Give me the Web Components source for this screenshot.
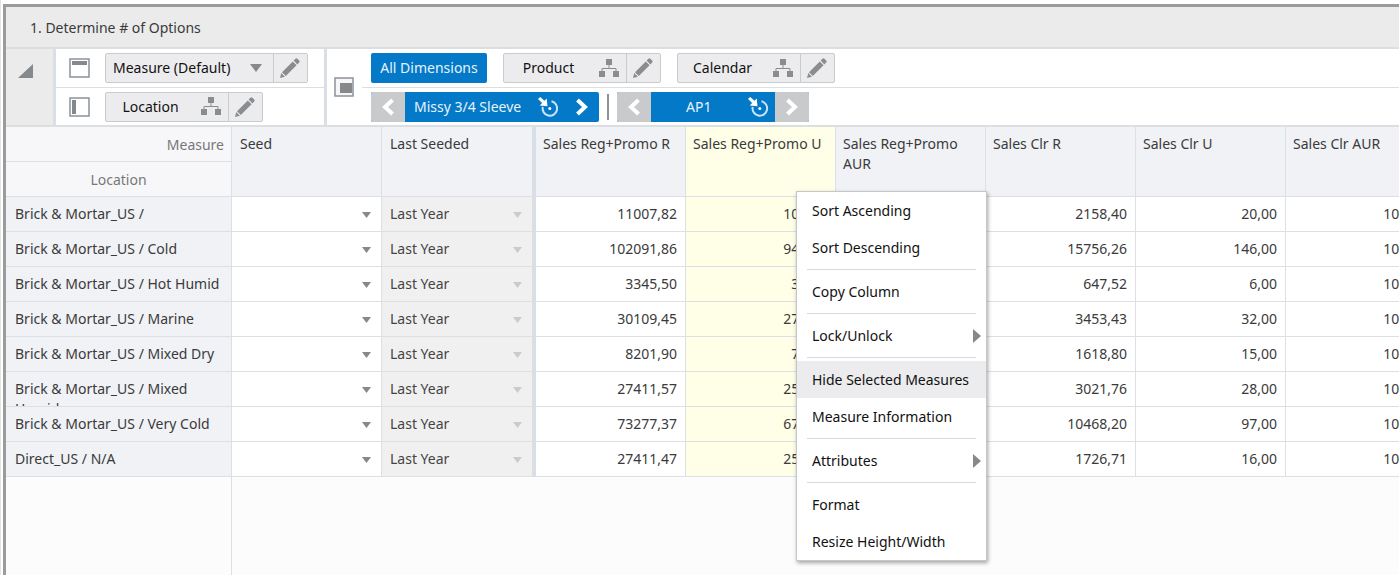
<!DOCTYPE html>
<html lang="en">
<head>
<meta charset="utf-8">
<title>Determine # of Options</title>
<style>
    html, body { height: 100%; }
    body {
        margin: 0;
        overflow: hidden;
        background: #fff;
        color: #3a3a3a;
        font: 14px/20px "Noto Sans", "Open Sans", sans-serif;
    }
</style>
</head>
<body>
<plan-view>
    <span slot="title">1. Determine # of Options</span>
    <plan-toolbar slot="toolbar"></plan-toolbar>
    <pivot-grid slot="grid"></pivot-grid>
    <column-menu slot="menu"></column-menu>
</plan-view>

<script>
const icons = {
    pencil: `<svg width="22" height="22" viewBox="0 0 22 22" fill="#8a8d90"><path d="M1 21l1.300-4.900 3.600 3.600zM3 15.200L13.800 4.400l3.800 3.800L6.800 19zM14.600 3.600l1.800-1.800q1-1 2 0l1.800 1.800q1 1 0 2l-1.800 1.800z"/></svg>`,
    tree: `<svg width="20" height="19" viewBox="0 0 20 19"><path d="M10 6v4M3 13v-3.500h14V13" fill="none" stroke="#8a8d90" stroke-width="1"/><path d="M7 0h6v6H7zM0 12h6v6H0zM14 12h6v6h-6z" fill="#8a8d90"/></svg>`,
    target: `<svg width="22" height="22" viewBox="0 0 22 22"><path d="M14.500 5.300a7.300 7.300 0 1 1-8.800 5.600" fill="none" stroke="#c8e4f7" stroke-width="2"/><circle cx="12.800" cy="12.500" r="1.500" fill="#fff"/><path d="M3.200 1l4.300 3.700 2.200-2.200.8 7.700-7.700-.8 2.300-2.300L1 3z" fill="#fff"/></svg>`,
    down: `<svg width="12" height="8" viewBox="0 0 12 8"><path d="M0 0h12L6 8z" fill="#85898c"/></svg>`,
    prev: `<svg width="14" height="18" viewBox="0 0 14 18"><path d="M11.500 2L4 9l7.500 7" fill="none" stroke="#fff" stroke-width="4"/></svg>`,
    next: `<svg width="14" height="18" viewBox="0 0 14 18"><path d="M2.500 2L10 9l-7.500 7" fill="none" stroke="#fff" stroke-width="4"/></svg>`
};

class PlanView extends HTMLElement {
    constructor() {
        super();
        this.root = this.attachShadow({mode: 'open'});
        this.root.innerHTML = `
            <style>
                :host {
                    display: flex;
                    box-sizing: border-box;
                    height: 100%;
                    padding: 4px 0 0 2px;
                    border-left: 1px solid #e4e4e4;
                }
                section {
                    flex: 1;
                    min-width: 0;
                    display: flex;
                    flex-direction: column;
                    border: solid #9b9b9b;
                    border-width: 3px 0 0 3px;
                }
                h1 {
                    margin: 0;
                    padding: 11px 24px 9px;
                    font: inherit;
                    background: #ebebeb;
                    border-bottom: 2px solid #dcdee0;
                }
            </style>
            <section>
                <h1><slot name="title"></slot></h1>
                <slot name="toolbar"></slot>
                <slot name="grid"></slot>
            </section>
            <slot name="menu"></slot>
        `;
    }
}
customElements.define('plan-view', PlanView);

// Dimension chip: label, an optional icon and an edit button
class DimChip extends HTMLElement {
    constructor() {
        super();
        this.root = this.attachShadow({mode: 'open'});
    }

    connectedCallback() {
        const icon = this.getAttribute('icon');
        this.root.innerHTML = `
            <style>
                :host {
                    display: inline-flex;
                    box-sizing: border-box;
                    height: 30px;
                    color: #111;
                    background: #ececee;
                    border: 1px solid #c9cbce;
                    border-radius: 2px;
                }
                button {
                    display: flex;
                    align-items: center;
                    padding: 0;
                    border: 0;
                    background: none;
                    color: inherit;
                    font: inherit;
                }
                .main { width: 122px; padding: 0 7px 0 0; }
                .main span { flex: 1; padding-right: 6px; text-align: center; }
                :host([icon=down]) .main { width: 167px; padding: 0 11px 0 7px; }
                :host([icon=down]) span { padding: 0; text-align: left; white-space: nowrap; }
                .edit {
                    width: 34px;
                    justify-content: center;
                    padding-right: 2px;
                    border-left: 1px solid #c9cbce;
                }
            </style>
            <button class="main"><span><slot></slot></span>${icons[icon]}</button>
            <button class="edit" aria-label="Edit ${this.textContent}">${icons.pencil}</button>
        `;
    }
}
customElements.define('dim-chip', DimChip);

class DimStepper extends HTMLElement {
    constructor() {
        super();
        this.root = this.attachShadow({mode: 'open'});
    }

    connectedCallback() {
        const off = name => this.hasAttribute(name) ? 'disabled' : '';
        this.root.innerHTML = `
            <style>
                :host {
                    display: inline-flex;
                    height: 30px;
                    color: #e6f3fc;
                    background: #0479c7;
                    border-radius: 2px;
                    overflow: hidden;
                }
                button {
                    display: flex;
                    align-items: center;
                    justify-content: center;
                    width: 34px;
                    padding: 0;
                    border: 0;
                    background: none;
                    color: inherit;
                    font: inherit;
                }
                button:disabled { background: #c9cacc; }
                .value { width: auto; min-width: 124px; padding: 0 6px 0 9px; }
                .value span { flex: 1; margin-right: 16px; text-align: center; white-space: nowrap; }
                :host([last]) .value { padding-left: 15px; }
            </style>
            <button ${off('first')} aria-label="Previous">${icons.prev}</button>
            <button class="value"><span><slot></slot></span>${icons.target}</button>
            <button ${off('last')} aria-label="Next">${icons.next}</button>
        `;
    }
}
customElements.define('dim-stepper', DimStepper);

class PlanToolbar extends HTMLElement {
    constructor() {
        super();
        this.root = this.attachShadow({mode: 'open'});
        this.root.innerHTML = `
            <style>
                :host {
                    display: flex;
                    background: #fff;
                    border-bottom: 2px solid #dcdfe2;
                }
                .fold {
                    display: flex;
                    align-items: flex-start;
                    width: 50px;
                    padding: 15px 0 0 12px;
                    border: 0;
                    border-right: 3px solid #d9dfe4;
                    background: #ebebeb;
                }
                .axes { width: 268px; border-right: 3px solid #d9dfe4; }
                .page { display: flex; align-items: center; padding: 0 8px 0 7px; }
                .slices { flex: 1; }
                .row {
                    display: flex;
                    align-items: center;
                    box-sizing: border-box;
                    height: 37px;
                }
                .row:first-child { height: 39px; border-bottom: 1px solid #dcdfe2; }
                .axes .row { gap: 15px; padding-left: 13px; }
                .slices .row { padding-left: 9px; gap: 16px; }
                .slices .row + .row { gap: 8px; }
                .all {
                    height: 30px;
                    width: 116px;
                    padding: 0;
                    border: 0;
                    border-radius: 2px;
                    background: #0479c7;
                    color: #e6f3fc;
                    font: inherit;
                    white-space: nowrap;
                }
                hr { width: 2px; height: 26px; margin: 0; border: 0; background: #909396; }
            </style>
            <button class="fold" aria-label="Collapse">
                <svg width="15" height="14" viewBox="0 0 15 14"><path d="M15 0v14H0z" fill="#85898c"/></svg>
            </button>
            <div class="axes">
                <div class="row">
                    <svg width="21" height="20" viewBox="0 0 21 20"><path d="M1 1h19v18H1z" fill="#fff" stroke="#8b939b" stroke-width="1.500"/><path d="M3 3h15v4H3z" fill="#85898c"/></svg>
                    <dim-chip icon="down">Measure (Default)</dim-chip>
                </div>
                <div class="row">
                    <svg width="21" height="20" viewBox="0 0 21 20"><path d="M1 1h19v18H1z" fill="#fff" stroke="#8b939b" stroke-width="1.500"/><path d="M3 3h4v14H3z" fill="#85898c"/></svg>
                    <dim-chip icon="tree">Location</dim-chip>
                </div>
            </div>
            <div class="page">
                <svg width="20" height="20" viewBox="0 0 20 20"><path d="M1 1h18v18H1z" fill="#f6f6f6" stroke="#8b939b" stroke-width="1.500"/><path d="M6 6h12v10H6z" fill="#85898c"/></svg>
            </div>
            <div class="slices">
                <div class="row">
                    <button class="all">All Dimensions</button>
                    <dim-chip icon="tree">Product</dim-chip>
                    <dim-chip icon="tree">Calendar</dim-chip>
                </div>
                <div class="row">
                    <dim-stepper first>Missy 3/4 Sleeve</dim-stepper>
                    <hr>
                    <dim-stepper first last>AP1</dim-stepper>
                </div>
            </div>
        `;
    }
}
customElements.define('plan-toolbar', PlanToolbar);

class PickCell extends HTMLElement {
    constructor() {
        super();
        this.root = this.attachShadow({mode: 'open'});
    }

    connectedCallback() {
        const value = this.getAttribute('value');
        const label = this.getAttribute('label');
        const off = this.hasAttribute('disabled') ? 'disabled' : '';
        this.root.innerHTML = `
            <style>
                :host { display: flex; align-items: center; height: 34px; padding-right: 10px; }
                :host([disabled]) { background: #f0f0f0; }
                :host([disabled]) svg { opacity: .35; }
                select {
                    flex: 1;
                    min-width: 0;
                    height: 34px;
                    padding: 0 8px;
                    border: 0;
                    appearance: none;
                    background: none;
                    color: #444;
                    opacity: 1;
                    font: inherit;
                }
                svg { width: 9px; height: 6px; margin-top: 2px; }
            </style>
            <select aria-label="${label}" ${off}><option>${value}</option></select>${icons.down}
        `;
    }
}
customElements.define('pick-cell', PickCell);

const measures = ['Sales Reg+Promo R', 'Sales Reg+Promo U', 'Sales Reg+Promo AUR', 'Sales Clr R', 'Sales Clr U', 'Sales Clr AUR'];
const rows = [
    ['Brick & Mortar_US /', '11007,82', '102,00', '', '2158,40', '20,00', '107,92'],
    ['Brick & Mortar_US / Cold', '102091,86', '946,00', '', '15756,26', '146,00', '107,92'],
    ['Brick & Mortar_US / Hot Humid', '3345,50', '31,00', '', '647,52', '6,00', '107,92'],
    ['Brick & Mortar_US / Marine', '30109,45', '279,00', '', '3453,43', '32,00', '107,92'],
    ['Brick & Mortar_US / Mixed Dry', '8201,90', '76,00', '', '1618,80', '15,00', '107,92'],
    ['Brick & Mortar_US / Mixed Humid', '27411,57', '254,00', '', '3021,76', '28,00', '107,92'],
    ['Brick & Mortar_US / Very Cold', '73277,37', '679,00', '', '10468,20', '97,00', '107,92'],
    ['Direct_US / N/A', '27411,47', '254,00', '', '1726,71', '16,00', '107,92']
];

class PivotGrid extends HTMLElement {
    constructor() {
        super();
        this.root = this.attachShadow({mode: 'open'});
    }

    connectedCallback() {
        this.render();
    }

    render() {
        const picked = i => i === 1 ? 'picked' : '';
        const esc = text => text.replace('&', '&amp;');
        this.root.innerHTML = `
            <style>
                :host {
                    flex: 1;
                    min-height: 0;
                    display: flex;
                    flex-direction: column;
                    overflow: hidden;
                    background: #fcfcfd;
                }
                table { table-layout: fixed; width: 0; border-spacing: 0; }
                .side { width: 226px; }
                .col { width: 150px; }
                .edge { width: 154px; }
                th, td {
                    box-sizing: border-box;
                    height: 35px;
                    padding: 0;
                    border: solid #dcdfe3;
                    border-width: 0 1px 1px 0;
                    font-weight: normal;
                    vertical-align: top;
                    background: #fff;
                }
                th { text-align: left; background: #f1f2f6; }
                thead th { padding: 7px; }
                thead th.lead { padding-left: 8px; }
                thead th.corner { padding: 8px 7px 6px; color: #777; background: #f7f7fa; }
                .corner.top { text-align: right; }
                .corner.low { text-align: center; }
                .last { border-right: 4px solid #d9dfe4; }
                tbody th div { height: 27px; padding: 7px 5px 0 9px; overflow: hidden; }
                td.num { padding: 7px 8px 0; text-align: right; }
                .picked { background: #ffffe8; }
                .rest { flex: 1; box-sizing: border-box; width: 226px; border-right: 1px solid #dcdfe3; }
            </style>
            <table>
                <colgroup>
                    <col class="side"><col class="col"><col class="edge">
                    ${measures.map(_ => '<col class="col">').join('')}
                </colgroup>
                <thead>
                    <tr>
                        <th class="corner top">Measure</th>
                        <th rowspan="2" class="lead">Seed</th>
                        <th rowspan="2" class="lead last">Last Seeded</th>
                        ${measures.map((m, i) => `<th rowspan="2" class="${picked(i)}">${m}</th>`).join('')}
                    </tr>
                    <tr><th class="corner low">Location</th></tr>
                </thead>
                <tbody>
                    ${rows.map(([name, ...nums]) => `
                        <tr>
                            <th scope="row"><div>${esc(name)}</div></th>
                            <td><pick-cell label="Seed" value=""></pick-cell></td>
                            <td class="last"><pick-cell label="Last Seeded" value="Last Year" disabled></pick-cell></td>
                            ${nums.map((n, i) => `<td class="num ${picked(i)}">${n}</td>`).join('')}
                        </tr>
                    `).join('')}
                </tbody>
            </table>
            <div class="rest"></div>
        `;
    }
}
customElements.define('pivot-grid', PivotGrid);

class ColumnMenu extends HTMLElement {
    constructor() {
        super();
        this.root = this.attachShadow({mode: 'open'});
        const arrow = `<svg width="8" height="14" viewBox="0 0 8 14"><path d="M0 0l8 7-8 7z" fill="#85898c"/></svg>`;
        this.root.innerHTML = `
            <style>
                /* floats over the grid, next to the clicked column */
                :host {
                    position: absolute;
                    left: 796px;
                    top: 191px;
                    width: 189px;
                    background: #fff;
                    border: 1px solid #c4c6c8;
                    box-shadow: 1px 2px 4px rgba(0, 0, 0, .35);
                }
                button {
                    display: flex;
                    align-items: center;
                    justify-content: space-between;
                    width: 100%;
                    height: 37px;
                    padding: 0 5px 0 15px;
                    border: 0;
                    background: none;
                    color: #111;
                    font: inherit;
                    white-space: nowrap;
                }
                button.on { background: #ececee; }
                hr { margin: 3px 10px; border: 0; border-top: 1px solid #d8dadc; }
            </style>
            <button>Sort Ascending</button>
            <button>Sort Descending</button>
            <hr>
            <button>Copy Column</button>
            <hr>
            <button>Lock/Unlock ${arrow}</button>
            <hr>
            <button class="on">Hide Selected Measures</button>
            <button>Measure Information</button>
            <hr>
            <button>Attributes ${arrow}</button>
            <hr>
            <button>Format</button>
            <button>Resize Height/Width</button>
        `;
    }
}
customElements.define('column-menu', ColumnMenu);
</script>
</body>
</html>
